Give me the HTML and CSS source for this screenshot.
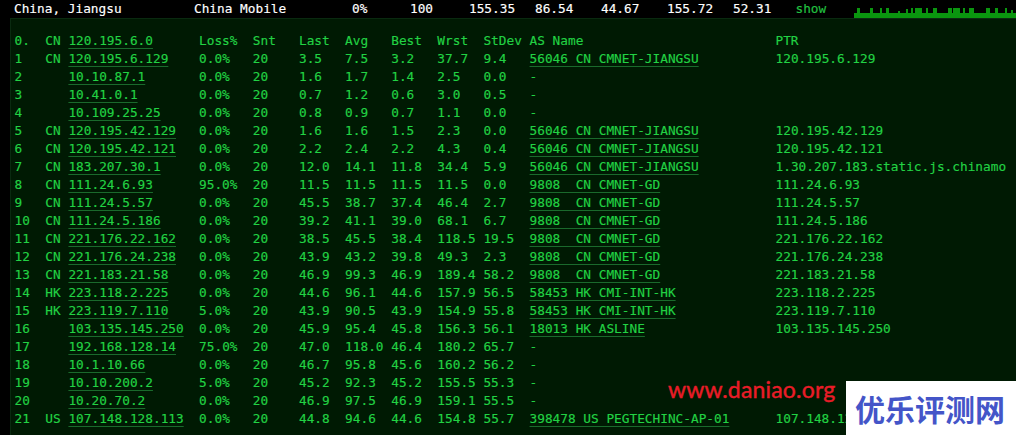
FILE: index.html
```html
<!DOCTYPE html>
<html lang="en">
<head>
<meta charset="utf-8">
<title>Traceroute</title>
<link rel="stylesheet" href="styles.css">
</head>
<body>
<div class="page">
<header class="summary">
<span class="cell c-region">China, Jiangsu</span>
<span class="cell c-isp">China Mobile</span>
<span class="cell c-loss">0%</span>
<span class="cell c-sent">100</span>
<span class="cell c-num">155.35</span>
<span class="cell c-num">86.54</span>
<span class="cell c-num">44.67</span>
<span class="cell c-num">155.72</span>
<span class="cell c-last">52.31</span>
<span class="cell c-show">show</span>
<svg class="spark" width="162" height="18" viewBox="854 0 162 18" aria-hidden="true">
<path fill="#0a960f" d="M854 13h162v5H854zM857 8h3v5h-3zM870 8h3v5h-3zM880 8h2v5h-2zM886 8h3v5h-3zM898 11h2v2h-2zM906 9h2v4h-2zM911 8h2v5h-2zM915 8h7v5h-7zM926 8h2v5h-2zM933 8h4v5h-4zM948 8h4v5h-4zM953 8h7v5h-7zM963 8h2v5h-2zM969 8h5v5h-5zM986 8h4v5h-4zM995 8h3v5h-3zM1005 8h2v5h-2zM1011 10h2v3h-2z"/>
</svg>
</header>
<main class="panel">
<pre class="trace">0.  CN <a>120.195.6.0</a>      Loss%  Snt   Last  Avg   Best  Wrst  StDev AS Name                         PTR
1   CN <a>120.195.6.129</a>    0.0%   20    3.5   7.5   3.2   37.7  9.4   <a>56046 CN CMNET-JIANGSU</a>          120.195.6.129
2      <a>10.10.87.1</a>       0.0%   20    1.6   1.7   1.4   2.5   0.0   -
3      <a>10.41.0.1</a>        0.0%   20    0.7   1.2   0.6   3.0   0.5   -
4      <a>10.109.25.25</a>     0.0%   20    0.8   0.9   0.7   1.1   0.0   -
5   CN <a>120.195.42.129</a>   0.0%   20    1.6   1.6   1.5   2.3   0.0   <a>56046 CN CMNET-JIANGSU</a>          120.195.42.129
6   CN <a>120.195.42.121</a>   0.0%   20    2.2   2.4   2.2   4.3   0.4   <a>56046 CN CMNET-JIANGSU</a>          120.195.42.121
7   CN <a>183.207.30.1</a>     0.0%   20    12.0  14.1  11.8  34.4  5.9   <a>56046 CN CMNET-JIANGSU</a>          1.30.207.183.static.js.chinamo
8   CN <a>111.24.6.93</a>      95.0%  20    11.5  11.5  11.5  11.5  0.0   <a>9808  CN CMNET-GD</a>               111.24.6.93
9   CN <a>111.24.5.57</a>      0.0%   20    45.5  38.7  37.4  46.4  2.7   <a>9808  CN CMNET-GD</a>               111.24.5.57
10  CN <a>111.24.5.186</a>     0.0%   20    39.2  41.1  39.0  68.1  6.7   <a>9808  CN CMNET-GD</a>               111.24.5.186
11  CN <a>221.176.22.162</a>   0.0%   20    38.5  45.5  38.4  118.5 19.5  <a>9808  CN CMNET-GD</a>               221.176.22.162
12  CN <a>221.176.24.238</a>   0.0%   20    43.9  43.2  39.8  49.3  2.3   <a>9808  CN CMNET-GD</a>               221.176.24.238
13  CN <a>221.183.21.58</a>    0.0%   20    46.9  99.3  46.9  189.4 58.2  <a>9808  CN CMNET-GD</a>               221.183.21.58
14  HK <a>223.118.2.225</a>    0.0%   20    44.6  96.1  44.6  157.9 56.5  <a>58453 HK CMI-INT-HK</a>             223.118.2.225
15  HK <a>223.119.7.110</a>    5.0%   20    43.9  90.5  43.9  154.9 55.8  <a>58453 HK CMI-INT-HK</a>             223.119.7.110
16     <a>103.135.145.250</a>  0.0%   20    45.9  95.4  45.8  156.3 56.1  <a>18013 HK ASLINE</a>                 103.135.145.250
17     <a>192.168.128.14</a>   75.0%  20    47.0  118.0 46.4  180.2 65.7  -
18     <a>10.1.10.66</a>       0.0%   20    46.7  95.8  45.6  160.2 56.2  -
19     <a>10.10.200.2</a>      5.0%   20    45.2  92.3  45.2  155.5 55.3  -
20     <a>10.20.70.2</a>       0.0%   20    46.9  97.5  46.9  159.1 55.5  -
21  US <a>107.148.128.113</a>  0.0%   20    44.8  94.6  44.6  154.8 55.7  <a>398478 US PEGTECHINC-AP-01</a>      107.148.128.113</pre>
</main>
<div class="watermark">www.daniao.org</div>
<div class="brand">优乐评测网</div>
</div>
</body>
</html>
```
FILE: styles.css
```css
html, body {
  margin: 0;
  padding: 0;
  background: #000;
}
.page {
  position: relative;
  width: 1016px;
  height: 435px;
  overflow: hidden;
  background: #000;
  font-family: "DejaVu Sans Mono", monospace;
  font-size: 12.78px;
  line-height: 18px;
  -webkit-text-stroke: 0.15px currentColor;
}
.summary {
  display: flex;
  height: 18px;
  padding-left: 14px;
  color: #fff;
  white-space: pre;
  line-height: 17px;
}
.cell { flex: none; }
.c-region { width: 180px; }
.c-isp { width: 158px; }
.c-loss { width: 58px; }
.c-sent { width: 59px; }
.c-num { width: 66px; }
.c-last { width: 62.5px; }
.c-show { width: 58.5px; color: #22c040; }
.spark { flex: none; display: block; }
.panel {
  margin-left: 10px;
  height: 417px;
  box-sizing: border-box;
  padding: 13px 0 0 3.6px;
  background: #001a03;
  border-top: 1px solid #0a2a10;
  border-left: 1px solid #0a2a10;
}
.trace {
  margin: 0;
  font: inherit;
  color: #22d244;
  white-space: pre;
}
.trace a {
  text-decoration: underline;
  text-decoration-color: #1a6a2c;
  text-decoration-thickness: 1px;
  text-underline-offset: 3px;
}
.watermark {
  position: absolute;
  left: 668px;
  top: 375px;
  font-family: "Lato", sans-serif;
  font-size: 23px;
  line-height: 28px;
  font-weight: 400;
  letter-spacing: 0.18px;
  color: #ea1c28;
  -webkit-text-stroke: 0.4px #ea1c28;
}
.brand {
  position: absolute;
  left: 846px;
  top: 381px;
  width: 170px;
  height: 54px;
  background: #fff;
  color: #4455c8;
  font-family: "Noto Sans CJK SC", sans-serif;
  font-weight: 700;
  font-size: 30px;
  line-height: 54px;
  text-align: center;
  padding-right: 2px;
  box-sizing: border-box;
  -webkit-text-stroke: 0;
}
```
